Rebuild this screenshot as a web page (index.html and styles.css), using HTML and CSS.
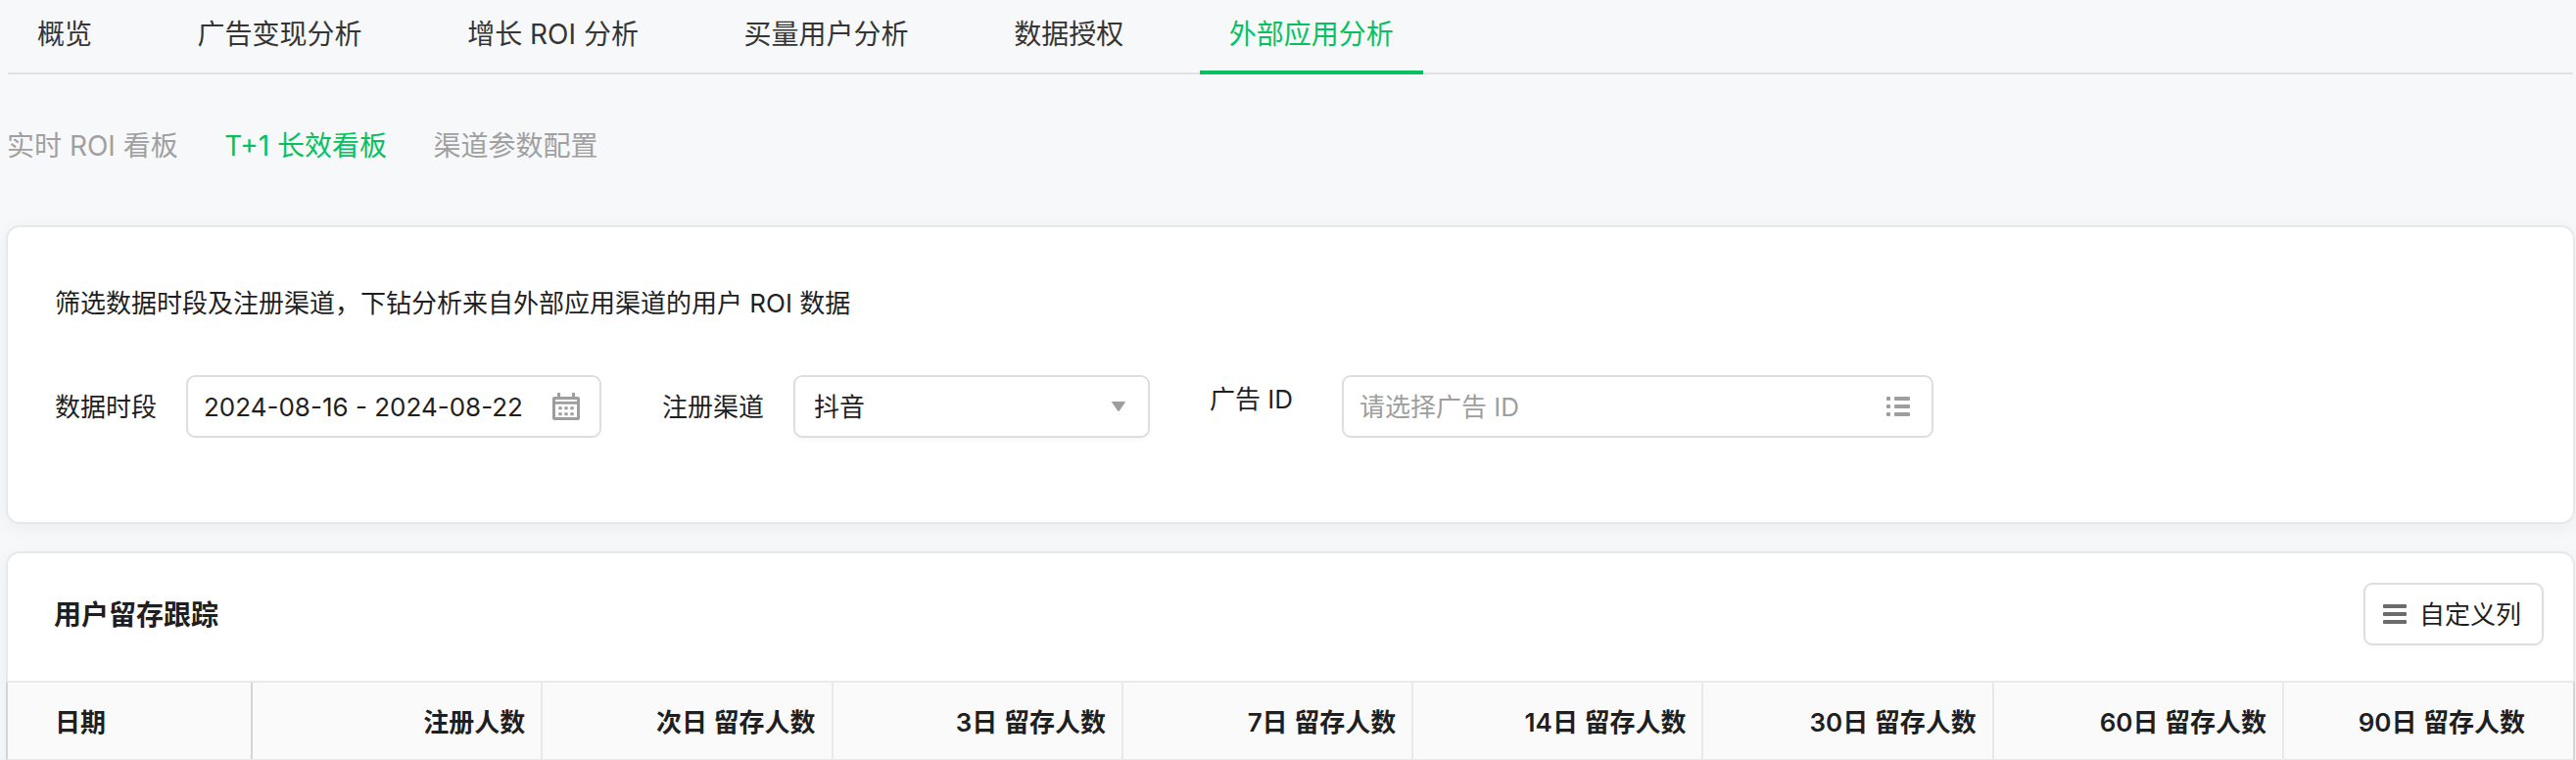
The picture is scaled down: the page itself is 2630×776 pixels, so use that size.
FILE: index.html
```html
<!DOCTYPE html>
<html lang="zh-CN">

<head>
    <meta charset="UTF-8">
    <meta name="viewport" content="width=device-width, initial-scale=1.0">
    <title>外部应用分析</title>
    <link rel="stylesheet" href="styles.css">
</head>

<body>
    <nav class="tabs">
        <a class="tab">概览</a>
        <a class="tab">广告变现分析</a>
        <a class="tab">增长 ROI 分析</a>
        <a class="tab">买量用户分析</a>
        <a class="tab">数据授权</a>
        <a class="tab active">外部应用分析</a>
    </nav>

    <div class="sub-tabs">
        <a class="sub-tab">实时 ROI 看板</a>
        <a class="sub-tab active">T+1 长效看板</a>
        <a class="sub-tab">渠道参数配置</a>
    </div>

    <section class="card filter-card">
        <p class="desc">筛选数据时段及注册渠道，下钻分析来自外部应用渠道的用户 ROI 数据</p>
        <div class="filters">
            <label class="label">数据时段</label>
            <div class="field date-field">
                <span class="field-text">2024-08-16 - 2024-08-22</span>
                <svg width="28" height="28" viewBox="0 0 28 28" fill="#9e9e9e">
                    <path fill-rule="evenodd" d="M5 0h3v4h12V0h3v4h3a2 2 0 0 1 2 2v20a2 2 0 0 1-2 2H2a2 2 0 0 1-2-2V6a2 2 0 0 1 2-2h3zM3 7v2h22V7zM3 11.7V25h22V11.7z" />
                    <path d="M6.3 14.3h3.4v3H6.3zM12.3 14.3h3.4v3h-3.4zM18.3 14.3h3.4v3h-3.4zM6.3 20.3h3.4v3H6.3zM12.3 20.3h3.4v3h-3.4zM18.3 20.3h3.4v3h-3.4z" />
                </svg>
            </div>
            <label class="label">注册渠道</label>
            <div class="field select-field">
                <span class="field-text">抖音</span>
                <svg width="14" height="10" viewBox="0 0 14 10">
                    <path fill="#9e9e9e" d="M.8 0h12.4q1.2 0 .5 1L8 9.3q-1 1.2-2 0L.3 1q-.7-1 .5-1z" />
                </svg>
            </div>
            <label class="label label-ad">广告 ID</label>
            <div class="field ad-field">
                <span class="field-text placeholder">请选择广告 ID</span>
                <svg width="24" height="20" viewBox="0 0 24 20" fill="#9e9e9e">
                    <rect width="4" height="4" rx="1" />
                    <rect x="8" width="16" height="4" rx="1" />
                    <rect y="8" width="4" height="4" rx="1" />
                    <rect x="8" y="8" width="16" height="4" rx="1" />
                    <rect y="16" width="4" height="4" rx="1" />
                    <rect x="8" y="16" width="16" height="4" rx="1" />
                </svg>
            </div>
        </div>
    </section>

    <section class="card table-card">
        <div class="card-head">
            <h2 class="title">用户留存跟踪</h2>
            <button class="btn" type="button">
                <svg width="24" height="20" viewBox="0 0 24 20" fill="#6b6b6b">
                    <rect width="24" height="4" rx="1" />
                    <rect y="8" width="24" height="4" rx="1" />
                    <rect y="16" width="24" height="4" rx="1" />
                </svg>
                <span class="field-text">自定义列</span>
            </button>
        </div>
        <div class="table-head">
            <div class="th">日期</div>
            <div class="th">注册人数</div>
            <div class="th">次日 留存人数</div>
            <div class="th">3日 留存人数</div>
            <div class="th">7日 留存人数</div>
            <div class="th">14日 留存人数</div>
            <div class="th">30日 留存人数</div>
            <div class="th">60日 留存人数</div>
            <div class="th">90日 留存人数</div>
        </div>
    </section>
</body>

</html>
```
FILE: styles.css
```css
* {
    box-sizing: border-box;
}

body {
    margin: 0;
    height: 776px;
    overflow: hidden;
    background: #f7f8fa;
    font-family: Inter, "Noto Sans CJK SC", sans-serif;
    font-size: 26px;
    line-height: 36px;
    color: #1f1f1f;
    white-space: nowrap;
}

svg {
    display: block;
    flex: none;
}

/* 顶部导航 */
.tabs {
    display: flex;
    gap: 47.6px;
    height: 76px;
    margin: 0 3px 0 8px;
    font-size: 28px;
    color: #353535;
    box-shadow: inset 0 -2px #e1e2e3;
}

.tab {
    height: 76px;
    padding: 15px 30px 0;
    line-height: 40px;
}

.tab.active {
    color: #07c160;
    border-bottom: 4px solid #07c160;
}

.sub-tabs {
    display: flex;
    gap: 47.5px;
    padding: 53px 7px 0;
    height: 154px;
    font-size: 28px;
    line-height: 40px;
    color: #a0a0a0;
}

.sub-tab.active {
    color: #07c160;
}

.card {
    width: 2623px;
    margin-left: 6px;
    background: #fff;
    border: 2px solid #e7e8ea;
    border-radius: 14px;
    box-shadow: 0 4px 20px rgba(0, 0, 0, 0.05);
}

/* 筛选区 */
.filter-card {
    height: 305px;
    padding: 60px 48px 0;
}

.desc {
    margin: 0 0 55px;
}

.filters {
    display: flex;
    align-items: center;
}

.label {
    width: 104px;
    margin-right: 30px;
    padding-top: 2px;
}

.field {
    display: flex;
    align-items: center;
    justify-content: space-between;
    height: 64px;
    border: 2px solid #dedede;
    border-radius: 9px;
    background: #fff;
}

.field-text {
    padding-top: 2px;
}

.date-field {
    width: 424px;
    padding: 0 20px 0 16px;
    margin-right: 62px;
}

.select-field {
    width: 364px;
    padding: 0 23px 0 19px;
    margin-right: 61px;
    box-shadow: 0 2px 4px rgba(0, 0, 0, 0.04);
}

.label-ad {
    margin-right: 31px;
    padding: 0 0 14px;
}

.ad-field {
    width: 604px;
    padding: 0 22px 0 16px;
}

.placeholder {
    color: #9e9e9e;
}

/* 留存表格 */
.table-card {
    margin-top: 28px;
    height: 240px;
    border-bottom-left-radius: 0;
    border-bottom-right-radius: 0;
}

.card-head {
    display: flex;
    justify-content: space-between;
    align-items: center;
    height: 130px;
    padding: 0 30px 6px 47px;
}

.title {
    margin: 0;
    padding-top: 2px;
    font-size: 28px;
    font-weight: 600;
}

.btn {
    display: flex;
    align-items: center;
    gap: 13px;
    width: 184px;
    height: 64px;
    padding: 0 18px;
    border: 2px solid #dedede;
    border-radius: 9px;
    background: #fff;
    font: inherit;
    color: inherit;
    box-shadow: 0 2px 4px rgba(0, 0, 0, 0.03);
}

.table-head {
    display: grid;
    grid-template-columns: 250px repeat(7, 296.3px) 1fr;
    height: 82px;
    margin: 0 -2px;
    border: 2px solid #e9eae9;
    border-left-color: #d5d5d5;
    border-right-color: #d5d5d5;
    background: #fafafa;
    font-weight: 600;
}

.th {
    padding: 23px 16px 0 0;
    text-align: right;
    border-right: 2px solid #e9e9e9;
}

.th:first-child {
    padding-left: 48px;
    text-align: left;
    border-right-color: #d5d5d5;
}

.th:last-child {
    padding-right: 49px;
    border-right: none;
}
```
